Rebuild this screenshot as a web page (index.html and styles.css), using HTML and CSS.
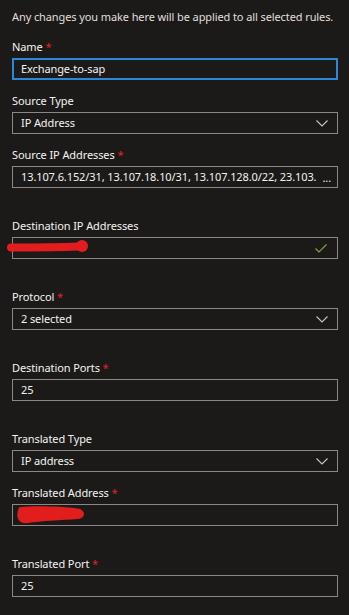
FILE: index.html
```html
<!DOCTYPE html>
<html>
<head>
<meta charset="utf-8">
<link rel="stylesheet" href="styles.css">
</head>
<body>
<div class="panel">
  <p class="intro">Any changes you make here will be applied to all selected rules.</p>

  <div class="field">
    <label class="label">Name <span class="req">*</span></label>
    <div class="box focused"><span class="value">Exchange-to-sap</span></div>
  </div>

  <div class="field">
    <label class="label">Source Type</label>
    <div class="box"><span class="value">IP Address</span>
      <svg class="chev" width="12" height="7" viewBox="0 0 12 7"><path d="M0.5 0.5 L6 6 L11.5 0.5" fill="none" stroke="#c8c6c4" stroke-width="1.1"/></svg>
    </div>
  </div>

  <div class="field spaced">
    <label class="label">Source IP Addresses <span class="req">*</span></label>
    <div class="box"><span class="value">13.107.6.152/31, 13.107.18.10/31, 13.107.128.0/22, 23.103.</span><span class="dots">...</span></div>
  </div>

  <div class="field spaced">
    <label class="label">Destination IP Addresses</label>
    <div class="box"><span class="value"></span>
      <svg class="check" width="12" height="9" viewBox="0 0 12 9"><path d="M0.5 4.5 L4 8 L11.5 0.5" fill="none" stroke="#7ea33f" stroke-width="1.2"/></svg>
      <svg class="scribble s1" width="84" height="16" viewBox="0 0 84 16"><path d="M5 9.5 C 25 9.5, 50 9.5, 72 8.5" fill="none" stroke="#e21d1d" stroke-width="8" stroke-linecap="round"/><circle cx="76" cy="8" r="6" fill="#e21d1d"/></svg>
    </div>
  </div>

  <div class="field spaced">
    <label class="label">Protocol <span class="req">*</span></label>
    <div class="box"><span class="value">2 selected</span>
      <svg class="chev" width="12" height="7" viewBox="0 0 12 7"><path d="M0.5 0.5 L6 6 L11.5 0.5" fill="none" stroke="#c8c6c4" stroke-width="1.1"/></svg>
    </div>
  </div>

  <div class="field spaced">
    <label class="label">Destination Ports <span class="req">*</span></label>
    <div class="box"><span class="value">25</span></div>
  </div>

  <div class="field">
    <label class="label">Translated Type</label>
    <div class="box"><span class="value">IP address</span>
      <svg class="chev" width="12" height="7" viewBox="0 0 12 7"><path d="M0.5 0.5 L6 6 L11.5 0.5" fill="none" stroke="#c8c6c4" stroke-width="1.1"/></svg>
    </div>
  </div>

  <div class="field spaced">
    <label class="label">Translated Address <span class="req">*</span></label>
    <div class="box"><span class="value"></span>
      <svg class="scribble s2" width="70" height="20" viewBox="0 0 70 20"><path d="M4 2 C 20 0.5, 48 1.5, 62 3.5 C 70 5, 70 13, 62 14 C 45 15, 25 16, 12 18 C 3 19.5, 0.5 13, 1.5 8 C 2 4, 3 2, 4 2 Z" fill="#e21d1d"/></svg>
    </div>
  </div>

  <div class="field">
    <label class="label">Translated Port <span class="req">*</span></label>
    <div class="box"><span class="value">25</span></div>
  </div>
</div>
</body>
</html>
```

FILE: styles.css
```css
html, body {
  margin: 0;
  padding: 0;
  background: #1b1a19;
}
body {
  font-family: "Noto Sans", "Open Sans", sans-serif;
  font-size: 11px;
  letter-spacing: -0.1px;
  color: #f3f2f1;
}
.panel {
  padding: 9px 11px 0 12px;
}
.intro {
  margin: 0 0 14px 0;
  line-height: 16px;
  white-space: nowrap;
  color: #e1dfdd;
}
.field {
  display: flex;
  flex-direction: column;
  margin-bottom: 13px;
}
.field.spaced {
  margin-bottom: 30px;
}
.label {
  line-height: 16px;
  margin-bottom: 3px;
  color: #f3f2f1;
}
.req {
  color: #e3202a;
}
.box {
  position: relative;
  height: 22px;
  box-sizing: border-box;
  border: 1px solid #8a8886;
  display: flex;
  align-items: center;
  padding: 0 6px 0 8px;
  color: #f3f2f1;
}
.box.focused {
  border: 2px solid #2b88d8;
  padding-left: 7px;
}
.value {
  flex: 1;
  line-height: 16px;
  white-space: nowrap;
  overflow: hidden;
}
.dots {
  flex: none;
  margin-left: 3px;
}
.chev {
  flex: none;
  margin-right: 3px;
}
.check {
  flex: none;
  margin-right: 4px;
}
.scribble {
  position: absolute;
}
.s1 {
  left: -7px;
  top: 0px;
}
.s2 {
  left: 3px;
  top: 0px;
}
```
